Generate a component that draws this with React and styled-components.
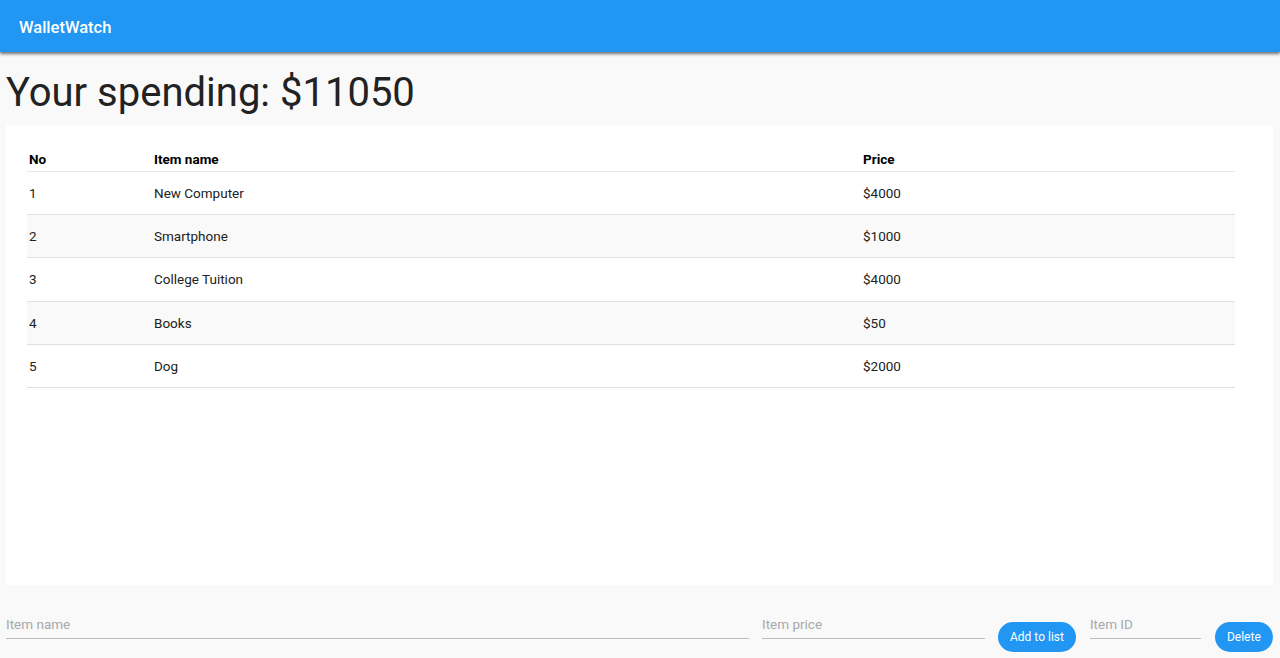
import React from 'react'
import styled, { createGlobalStyle } from 'styled-components';

const Global = createGlobalStyle`
  body {
    margin: 0;
    background-color: #f9f9f9;
    font-family: Roboto, "Liberation Sans", sans-serif;
    color: rgba(0,0,0,0.87);
  }
`;

const Header = styled.header`
  height: 52px;
  display: flex;
  align-items: center;
  padding: 2px 0 0 19px;
  box-sizing: border-box;
  background-color: #2196f3;
  box-shadow: 0 2px 3px rgba(0,0,0,0.55);
  position: relative;
  z-index: 1;
`;

const Brand = styled.span`
  color: #fff;
  font-size: 16.5px;
  font-weight: 500;
`;

const Main = styled.main`
  padding: 0 7px 0 6px;
`;

const Title = styled.h1`
  margin: 13px 0 4px;
  font-size: 40px;
  line-height: 56px;
  font-weight: 400;
  color: #222;
`;

const Card = styled.div`
  height: 460px;
  box-sizing: border-box;
  background: #fff;
  border-radius: 2px;
  padding: 20px 0 0 21px;
`;

const Table = styled.table`
  width: 1208px;
  border-collapse: collapse;
  font-size: 13.5px;
  th, td {
    text-align: left;
    padding: 0 2px;
  }
  th {
    font-weight: 700;
    color: #000;
    height: 25px;
    padding-top: 1px;
    border-bottom: 1px solid #e8e8e8;
  }
  td {
    height: 42.2px;
    color: #222;
    border-bottom: 1px solid #e0e0e0;
  }
`;

const Row = styled.tr`
  background: ${p => (p.$striped ? '#f9f9f9' : '#fff')};
`;

const Form = styled.div`
  display: flex;
  align-items: flex-start;
  gap: 13px;
  margin-top: 23px;
`;

const Input = styled.input`
  width: ${p => p.$w}px;
  margin-left: ${p => p.$ml || 0}px;
  flex-shrink: 0;
  height: 31px;
  box-sizing: border-box;
  border: none;
  border-bottom: 1px solid #bdbdbd;
  background: transparent;
  font-family: inherit;
  font-size: 13.5px;
  padding: 2px 0 0;
  outline: none;
  &::placeholder {
    color: #a8a8a8;
  }
`;

const Button = styled.button`
  margin-top: 14px;
  margin-left: ${p => p.$ml || 0}px;
  height: 30px;
  padding: 0 12px;
  border: none;
  border-radius: 15px;
  background: #2196f3;
  color: #fff;
  font-family: inherit;
  font-size: 12px;
  white-space: nowrap;
  cursor: pointer;
`;

const items = [
  ['New Computer', 4000],
  ['Smartphone', 1000],
  ['College Tuition', 4000],
  ['Books', 50],
  ['Dog', 2000],
];

const App = () => {
  const total = items.reduce((s, i) => s + i[1], 0);
  return (
    <>
      <Global />
      <Header>
        <Brand>WalletWatch</Brand>
      </Header>
      <Main>
        <Title>Your spending: ${total}</Title>
        <Card>
          <Table>
            <colgroup>
              <col style={{ width: 125 }} />
              <col style={{ width: 709 }} />
              <col />
            </colgroup>
            <thead>
              <tr>
                <th>No</th>
                <th>Item name</th>
                <th>Price</th>
              </tr>
            </thead>
            <tbody>
              {items.map(([name, price], i) => (
                <Row key={name} $striped={i % 2 === 1}>
                  <td>{i + 1}</td>
                  <td>{name}</td>
                  <td>${price}</td>
                </Row>
              ))}
            </tbody>
          </Table>
        </Card>
        <Form>
          <Input $w={743} placeholder="Item name" />
          <Input $w={223} placeholder="Item price" />
          <Button>Add to list</Button>
          <Input $w={111} $ml={1} placeholder="Item ID" />
          <Button $ml={1}>Delete</Button>
        </Form>
      </Main>
    </>
  );
};

export default App
